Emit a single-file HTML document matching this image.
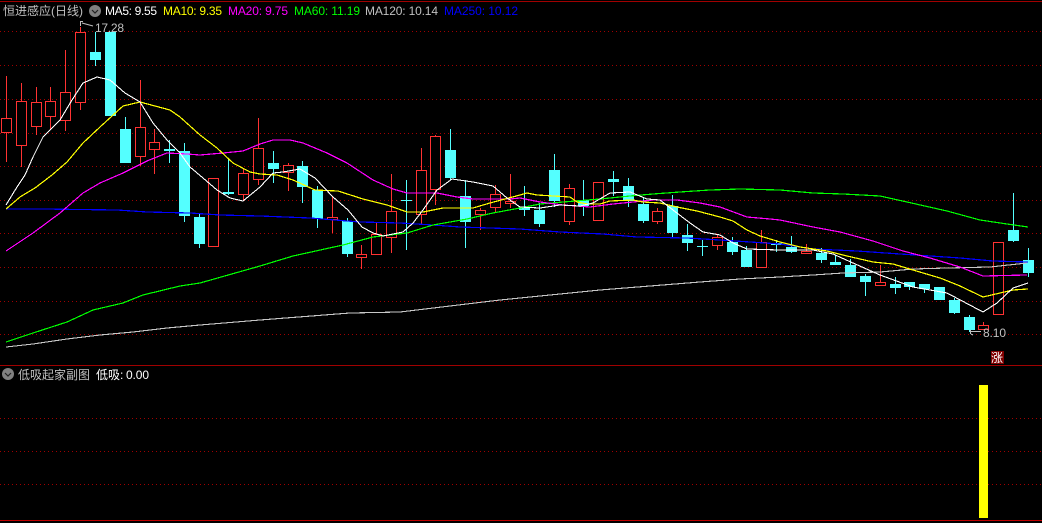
<!DOCTYPE html>
<html>
<head>
<meta charset="utf-8">
<style>
html,body{margin:0;padding:0;background:#000;width:1042px;height:523px;overflow:hidden}
svg{display:block}
text{font-family:"Liberation Sans","WenQuanYi Zen Hei","Noto Sans CJK SC",sans-serif;font-size:12px}
.ma{fill:none;stroke-linejoin:round;shape-rendering:crispEdges}
</style>
</head>
<body>
<svg width="1042" height="523" viewBox="0 0 1042 523" xmlns="http://www.w3.org/2000/svg">
<rect width="1042" height="523" fill="#000"/>
<rect x="0" y="1" width="1042" height="1" fill="#a00000"/>
<rect x="0" y="365" width="1042" height="1" fill="#a00000"/>
<rect x="0" y="520" width="1042" height="1" fill="#c00000"/>
<path d="M0 31.5H1042M0 65.5H1042M0 99.5H1042M0 133.5H1042M0 166.5H1042M0 200.5H1042M0 233.5H1042M0 267.5H1042M0 301.5H1042M0 334.5H1042M0 418.5H1042M0 451.5H1042M0 484.5H1042" stroke="#a00000" stroke-width="1" stroke-dasharray="1 3" fill="none"/>

<!-- red wicks -->
<path fill="#ff3232" d="M6 76h1v86h-1zM21 83h1v84h-1zM36 87h1v48h-1zM50 87h1v42h-1zM65 50h1v81h-1zM80 27h1v83h-1zM140 80h1v86h-1zM154 129h1v45h-1zM243 168h1v33h-1zM258 118h1v67h-1zM288 163h1v28h-1zM332 197h1v36h-1zM361 245h1v24h-1zM376 223h1v32h-1zM391 174h1v79h-1zM421 148h1v77h-1zM435 135h1v70h-1zM480 208h1v22h-1zM495 185h1v27h-1zM510 174h1v34h-1zM569 184h1v41h-1zM657 208h1v16h-1zM717 235h1v15h-1zM761 230h1v37h-1zM806 244h1v10h-1zM880 265h1v20h-1zM983 322h1v7h-1z"/>
<!-- red bodies -->
<g fill="#000" stroke="#ff3232" stroke-width="1">
<rect x="1.5" y="118.5" width="10" height="14"/>
<rect x="16.5" y="101.5" width="10" height="44"/>
<rect x="31.5" y="102.5" width="10" height="24"/>
<rect x="45.5" y="101.5" width="10" height="15"/>
<rect x="60.5" y="92.5" width="10" height="28"/>
<rect x="75.5" y="32.5" width="10" height="70"/>
<rect x="135.5" y="127.5" width="10" height="29"/>
<rect x="149.5" y="142.5" width="10" height="7"/>
<rect x="208.5" y="178.5" width="10" height="68"/>
<rect x="238.5" y="173.5" width="10" height="21"/>
<rect x="253.5" y="148.5" width="10" height="31"/>
<rect x="283.5" y="165.5" width="10" height="7"/>
<rect x="327.5" y="217.5" width="10" height="2"/>
<rect x="356.5" y="254.5" width="10" height="3"/>
<rect x="371.5" y="234.5" width="10" height="20"/>
<rect x="386.5" y="211.5" width="10" height="26"/>
<rect x="416.5" y="170.5" width="10" height="44"/>
<rect x="430.5" y="136.5" width="10" height="53"/>
<rect x="475.5" y="210.5" width="10" height="4"/>
<rect x="490.5" y="194.5" width="10" height="13"/>
<rect x="505.5" y="201.5" width="10" height="2"/>
<rect x="564.5" y="188.5" width="10" height="33"/>
<rect x="593.5" y="182.5" width="10" height="38"/>
<rect x="652.5" y="211.5" width="10" height="10"/>
<rect x="712.5" y="237.5" width="10" height="8"/>
<rect x="756.5" y="242.5" width="10" height="25"/>
<rect x="801.5" y="251.5" width="10" height="2"/>
<rect x="875.5" y="282.5" width="10" height="3"/>
<rect x="978.5" y="325.5" width="10" height="4"/>
<rect x="993.5" y="242.5" width="10" height="72"/>
</g>
<!-- cyan candles -->
<path fill="#54ffff" d="M95 32h1v34h-1zM90 52h11v8h-11zM105 32h11v84h-11zM125 117h1v46h-1zM120 129h11v34h-11zM169 140h1v23h-1zM164 149h11v2h-11zM184 143h1v79h-1zM179 151h11v65h-11zM199 213h1v35h-1zM194 217h11v27h-11zM228 158h1v37h-1zM223 192h11v2h-11zM273 151h1v32h-1zM268 163h11v6h-11zM302 161h1v42h-1zM297 166h11v21h-11zM317 186h1v42h-1zM312 190h11v29h-11zM347 218h1v39h-1zM342 221h11v33h-11zM406 180h1v70h-1zM401 200h11v1h-11zM450 129h1v51h-1zM445 150h11v28h-11zM465 180h1v68h-1zM460 196h11v26h-11zM524 186h1v30h-1zM519 207h11v3h-11zM539 203h1v24h-1zM534 210h11v14h-11zM554 154h1v53h-1zM549 170h11v31h-11zM583 180h1v36h-1zM578 200h11v6h-11zM613 171h1v25h-1zM608 179h11v3h-11zM628 178h1v29h-1zM623 186h11v15h-11zM643 197h1v26h-1zM638 204h11v17h-11zM672 195h1v42h-1zM667 206h11v27h-11zM687 224h1v27h-1zM682 235h11v8h-11zM702 240h1v16h-1zM697 246h11v1h-11zM732 237h1v18h-1zM727 242h11v10h-11zM746 246h1v21h-1zM741 250h11v17h-11zM776 240h1v12h-1zM771 243h11v2h-11zM791 236h1v17h-1zM786 247h11v5h-11zM821 248h1v15h-1zM816 253h11v7h-11zM835 255h1v10h-1zM830 262h11v3h-11zM850 259h1v18h-1zM845 265h11v12h-11zM865 274h1v22h-1zM860 276h11v6h-11zM895 277h1v17h-1zM890 284h11v4h-11zM909 282h1v8h-1zM904 282h11v5h-11zM924 284h1v9h-1zM919 284h11v5h-11zM934 287h11v13h-11zM954 298h1v16h-1zM949 300h11v13h-11zM969 315h1v17h-1zM964 317h11v13h-11zM1013 193h1v49h-1zM1008 230h11v11h-11zM1028 248h1v29h-1zM1023 260h11v13h-11z"/>

<!-- MA250 -->
<polyline class="ma" stroke="#0000ff" stroke-width="1.2" points="6,209 43,209 117,210 147,212 190,213 220,215 260,216 310,218 360,222 400,223 433,225 460,227 520,229 560,232 603,234 637,237 687,238 720,240 780,244 813,249 857,251 900,254 960,258 993,261 1028,262"/>
<!-- MA120 -->
<polyline class="ma" stroke="#c8c8c8" stroke-width="1.1" points="6,347 33,344 67,339 100,335 133,332 167,328 200,325 260,320 350,313 400,312 500,300 600,290 700,282 740,279 780,277 813,275 843,273 880,272 913,269 947,268 990,267 1027,263"/>
<!-- MA60 -->
<polyline class="ma" stroke="#00ff00" stroke-width="1.2" points="6,342 33,333 67,322 93,310 123,303 143,295 180,286 200,283 260,266 293,256 343,245 373,237 407,233 433,225 467,219 493,213 520,208 540,204 563,202 600,199 630,196 653,194 680,192 710,190 740,189 780,190 813,193 843,194 880,196 907,202 947,211 980,220 1007,224 1028,227"/>
<!-- MA20 -->
<polyline class="ma" stroke="#ff00ff" stroke-width="1.2" points="6,251 33,233 60,213 83,193 100,183 123,173 147,161 167,153 187,154 200,155 223,153 243,151 260,144 273,140 290,140 303,143 327,153 347,163 373,180 393,189 407,193 437,193 457,197 473,199 510,199 520,198 540,202 563,205 590,207 613,204 633,202 653,200 677,200 700,203 720,207 747,217 770,219 780,220 813,227 840,232 873,241 903,251 930,258 960,267 983,276 1027,275"/>
<!-- MA10 -->
<polyline class="ma" stroke="#ffff00" stroke-width="1.2" points="6,209 20,197 35,188 52,175 67,162 83,143 100,127 123,106 140,102 170,110 180,117 200,135 217,148 233,163 250,172 260,174 277,175 293,180 315,190 338,191 363,199 387,205 407,212 423,212 443,208 473,208 490,203 520,195 527,193 537,195 570,197 577,202 587,204 600,204 610,201 633,200 643,202 660,203 677,207 697,211 720,217 733,221 747,230 760,236 780,242 800,247 827,251 847,256 873,262 893,264 913,270 940,278 960,286 983,297 1000,293 1013,290 1028,289"/>
<!-- MA5 -->
<polyline class="ma" stroke="#ffffff" stroke-width="1.1" points="6,205 17,187 25,175 33,157 43,137 60,120 72,100 83,83 97,77 110,80 125,93 140,102 153,123 167,140 180,153 190,167 203,178 217,190 230,198 243,201 260,187 273,173 283,172 300,169 315,178 333,197 348,210 362,227 373,233 383,236 403,232 413,223 423,210 437,190 452,179 473,182 493,186 507,198 520,207 540,208 560,205 580,206 593,203 610,193 630,192 647,199 660,200 673,210 690,223 703,232 720,235 733,243 747,249 780,250 813,250 833,254 853,263 880,275 913,287 947,293 983,312 997,303 1013,288 1028,283"/>

<!-- volume bar -->
<rect x="979" y="385" width="9" height="133" fill="#ffff00"/>

<!-- header -->
<text x="3" y="15" fill="#c0c0c0" textLength="80" lengthAdjust="spacing">恒进感应(日线)</text>
<circle cx="95" cy="11" r="6" fill="#808080"/>
<path d="M92 10l3 3 3-3" fill="none" stroke="#222" stroke-width="1.2"/>
<text x="105" y="15" fill="#ffffff" textLength="52">MA5: 9.55</text>
<text x="163" y="15" fill="#ffff00" textLength="59">MA10: 9.35</text>
<text x="228" y="15" fill="#ff00ff" textLength="60">MA20: 9.75</text>
<text x="294" y="15" fill="#00ff00" textLength="66">MA60: 11.19</text>
<text x="365" y="15" fill="#c0c0c0" textLength="73">MA120: 10.14</text>
<text x="444" y="15" fill="#0000ff" textLength="74">MA250: 10.12</text>

<!-- high marker -->
<path d="M80.5 21v5M80 21.5h3M82 23l11 3" fill="none" stroke="#c0c0c0" stroke-width="1"/>
<text x="95" y="32" fill="#c0c0c0" textLength="29">17.28</text>
<!-- low marker -->
<path d="M970 331.5h11M970.5 330v4M971 334l2 1" fill="none" stroke="#c0c0c0" stroke-width="1"/>
<text x="983" y="337" fill="#c0c0c0" textLength="23">8.10</text>

<!-- zhang badge -->
<rect x="991" y="351" width="13" height="13" fill="#800000"/>
<text x="991" y="362" fill="#ffffff" style="font-size:12px">涨</text>

<!-- sub panel header -->
<circle cx="8" cy="374" r="6" fill="#808080"/>
<path d="M5 373l3 3 3-3" fill="none" stroke="#222" stroke-width="1.2"/>
<text x="18" y="379" fill="#c0c0c0">低吸起家副图</text>
<text x="96" y="379" fill="#ffffff">低吸:</text>
<text x="126" y="379" fill="#ffffff" textLength="23">0.00</text>
</svg>
</body>
</html>
